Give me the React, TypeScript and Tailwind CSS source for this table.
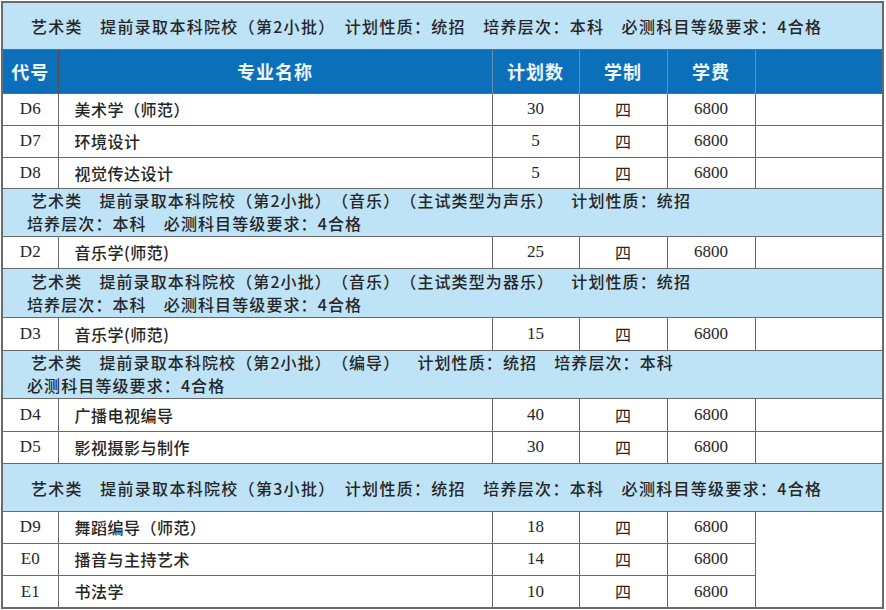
import React from 'react';

type Row = { code: string; name: string; plan: string; years: string; fee: string };

type Group = {
  lines: string[];
  rows: Row[];
  mergeLast?: boolean;
};

const groups: Group[] = [
  {
    lines: ['艺术类　提前录取本科院校（第2小批）\u2002计划性质：统招　培养层次：本科　必测科目等级要求：4合格'],
    rows: [
      { code: 'D6', name: '美术学（师范）', plan: '30', years: '四', fee: '6800' },
      { code: 'D7', name: '环境设计', plan: '5', years: '四', fee: '6800' },
      { code: 'D8', name: '视觉传达设计', plan: '5', years: '四', fee: '6800' },
    ],
  },
  {
    lines: [
      '艺术类　提前录取本科院校（第2小批）（音乐）（主试类型为声乐）　计划性质：统招',
      '培养层次：本科　必测科目等级要求：4合格',
    ],
    rows: [{ code: 'D2', name: '音乐学(师范)', plan: '25', years: '四', fee: '6800' }],
  },
  {
    lines: [
      '艺术类　提前录取本科院校（第2小批）（音乐）（主试类型为器乐）　计划性质：统招',
      '培养层次：本科　必测科目等级要求：4合格',
    ],
    rows: [{ code: 'D3', name: '音乐学(师范)', plan: '15', years: '四', fee: '6800' }],
  },
  {
    lines: [
      '艺术类　提前录取本科院校（第2小批）（编导）　计划性质：统招　培养层次：本科',
      '必测科目等级要求：4合格',
    ],
    rows: [
      { code: 'D4', name: '广播电视编导', plan: '40', years: '四', fee: '6800' },
      { code: 'D5', name: '影视摄影与制作', plan: '30', years: '四', fee: '6800' },
    ],
  },
  {
    lines: ['艺术类　提前录取本科院校（第3小批）\u2002计划性质：统招　培养层次：本科　必测科目等级要求：4合格'],
    rows: [
      { code: 'D9', name: '舞蹈编导（师范）', plan: '18', years: '四', fee: '6800' },
      { code: 'E0', name: '播音与主持艺术', plan: '14', years: '四', fee: '6800' },
      { code: 'E1', name: '书法学', plan: '10', years: '四', fee: '6800' },
    ],
    mergeLast: true,
  },
];

// row heights measured off the reference, in order of appearance
const rowHeights = [32, 32, 31, 32, 33, 33, 32, 32, 32, 33];
const bandHeights = [47, 48, 49, 48, 48];

const cjk = "font-['Noto_Sans_CJK_SC',sans-serif] [text-spacing-trim:space-all]";
const serif = "font-['Liberation_Serif','Noto_Sans_CJK_SC',serif]";
const cell = 'border border-[#6a6a6a]';

const App: React.FC = () => {
  let rowIndex = 0;

  return (
    <div className="bg-white w-[886px] h-[610px] pt-[1px] pl-[1px]">
      <table className="table-fixed border-collapse border-2 border-[#6a6a6a] w-[881px] text-[#262626]">
        <colgroup>
          <col className="w-[56px]" />
          <col className="w-[434px]" />
          <col className="w-[87px]" />
          <col className="w-[88px]" />
          <col className="w-[88px]" />
          <col className="w-[128px]" />
        </colgroup>
        <tbody>
          {groups.map((group, gi) => (
            <React.Fragment key={gi}>
              <tr style={{ height: bandHeights[gi] }}>
                <td
                  colSpan={6}
                  className={`${cell} bg-[#bee3f7] pl-[24px] align-middle ${cjk} font-medium text-[16px] tracking-[1.1px] leading-[23px]`}
                >
                  {group.lines.map((line, li) => (
                    <div
                      key={li}
                      className={
                        group.lines.length > 1
                          ? li === 0
                            ? 'pl-[4px]'
                            : ''
                          : 'pl-[4px] pt-[2px] tracking-[1.3px]'
                      }
                    >
                      {line}
                    </div>
                  ))}
                </td>
              </tr>

              {gi === 0 && (
                <tr className="h-[44px] bg-[#0b6fba] text-[#eef5fb]">
                  <th className={`border-r border-[#5a4a4a] ${cjk} text-[18px] font-bold tracking-[1px]`}>代号</th>
                  <th className={`border-r border-[#6d8fae] ${cjk} text-[18px] font-bold tracking-[1px]`}>专业名称</th>
                  <th className={`border-r border-[#6d8fae] ${cjk} text-[18px] font-bold tracking-[1px]`}>计划数</th>
                  <th className={`border-r border-[#6d8fae] ${cjk} text-[18px] font-bold tracking-[1px]`}>学制</th>
                  <th className={`border-r border-[#6d8fae] ${cjk} text-[18px] font-bold tracking-[1px]`}>学费</th>
                  <th />
                </tr>
              )}

              {group.rows.map((row, ri) => {
                const h = rowHeights[rowIndex++];
                return (
                  <tr key={row.code} style={{ height: h }}>
                    <td className={`${cell} text-center ${serif} text-[17px]`}>{row.code}</td>
                    <td className={`${cell} pl-[16px] ${cjk} font-medium text-[16px] tracking-[0.5px]`}>{row.name}</td>
                    <td className={`${cell} text-center ${serif} text-[17px]`}>{row.plan}</td>
                    <td className={`${cell} text-center ${cjk} text-[16px]`}>{row.years}</td>
                    <td className={`${cell} text-center ${serif} text-[17px]`}>{row.fee}</td>
                    {group.mergeLast ? (
                      ri === 0 && <td rowSpan={group.rows.length} className={cell} />
                    ) : (
                      <td className={cell} />
                    )}
                  </tr>
                );
              })}
            </React.Fragment>
          ))}
        </tbody>
      </table>
    </div>
  );
};

export default App;
